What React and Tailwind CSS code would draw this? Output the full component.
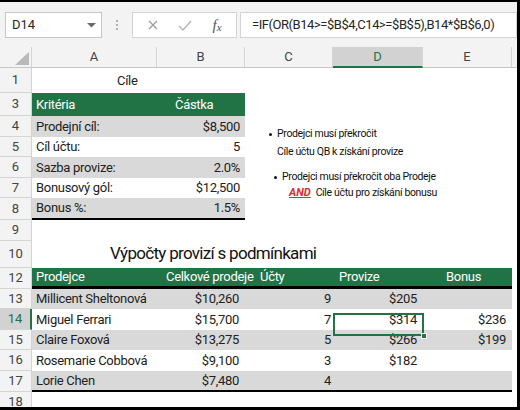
import React from "react";

function RH({ n, sel }) {
  return (
    <div
      className={
        sel
          ? "w-[32px] shrink-0 flex items-center justify-center border-b border-[#d4d4d4] border-r-2 border-r-[#217346] bg-[#d2d2d2] text-[13px] text-[#217346]"
          : "w-[32px] shrink-0 flex items-center justify-center border-b border-r border-[#d4d4d4] bg-[#f3f3f3] text-[13px] text-[#444]"
      }
    >
      {n}
    </div>
  );
}

function Cell({ w, className = "", children }) {
  return (
    <div className={`${w} shrink-0 flex items-center whitespace-nowrap ${className}`}>
      {children}
    </div>
  );
}

const WA = "w-[125px]";
const WB = "w-[88px]";
const WC = "w-[88px]";
const WD = "w-[90px]";
const WE = "w-[89px]";

function DataRow({ n, h, fill, last, sel, name, b, c, d, e }) {
  const wrap =
    "flex w-[480px] text-[13px] tracking-[-0.3px] text-[#222] " +
    (fill ? "bg-[#d9d9d9] " : "") +
    (last ? "border-b-2 border-black" : "");
  return (
    <div className={`flex ${h}`}>
      <RH n={n} sel={sel} />
      <div className={wrap}>
        <Cell w={WA} className="pl-[4px]">{name}</Cell>
        <Cell w={WB} className="justify-end pr-[6px]">{b}</Cell>
        <Cell w={WC} className="justify-end pr-[2px]">{c}</Cell>
        <Cell w={WD} className="justify-end pr-[6px]">{d}</Cell>
        <Cell w={WE} className="justify-end pr-[6px]">{e}</Cell>
      </div>
    </div>
  );
}

function GoalRow({ n, h, fill, last, label, value }) {
  const wrap =
    "flex w-[213px] text-[13px] tracking-[-0.3px] text-[#222] " +
    (fill ? "bg-[#d9d9d9] " : "") +
    (last ? "border-b-2 border-black" : "");
  return (
    <div className={`flex ${h}`}>
      <RH n={n} />
      <div className={wrap}>
        <Cell w={WA} className="pl-[4px]">{label}</Cell>
        <Cell w={WB} className="justify-end pr-[5px]">{value}</Cell>
      </div>
    </div>
  );
}

function ColHead({ w, label, sel }) {
  return (
    <div
      className={
        sel
          ? `${w} shrink-0 flex items-center justify-center bg-[#d2d2d2] border-b-2 border-b-[#217346] border-r border-r-[#d4d4d4] text-[#217346]`
          : `${w} shrink-0 flex items-center justify-center border-b border-b-[#c6c6c6] border-r border-r-[#d4d4d4] text-[#444]`
      }
    >
      {label}
    </div>
  );
}

function Bullet() {
  return <div className="w-[3px] h-[3px] rounded-full bg-[#111] shrink-0" />;
}

export default function App() {
  return (
    <div className="relative w-[520px] h-[410px] overflow-hidden bg-white border-t-2 border-r-[3px] border-b-[3px] border-black flex flex-col font-['Roboto',sans-serif]">
      {/* formula bar */}
      <div className="h-[45px] shrink-0 bg-[#f3f3f3] flex items-start pt-[10px] pl-[5px]">
        <div className="w-[97px] h-[26px] bg-white border border-[#c6c6c6] flex items-center justify-between pl-[6px] pr-[5px] text-[13px] text-[#262626]">
          <span>D14</span>
          <svg width="9" height="5" viewBox="0 0 9 5">
            <polygon points="0,0 9,0 4.5,4.5" fill="#6a6a6a" />
          </svg>
        </div>
        <div className="w-[30px] h-[26px] flex flex-col items-center justify-center gap-[2px]">
          <div className="w-[2px] h-[2px] bg-[#b0b0b0]" />
          <div className="w-[2px] h-[2px] bg-[#b0b0b0]" />
          <div className="w-[2px] h-[2px] bg-[#b0b0b0]" />
        </div>
        <div className="w-[105px] h-[26px] bg-white border border-[#d4d4d4] flex items-center">
          <div className="w-[37px] flex justify-center pl-[2px]">
            <svg width="10" height="10" viewBox="0 0 10 10">
              <path d="M1 1 L9 9 M9 1 L1 9" stroke="#9a9a9a" strokeWidth="1.2" fill="none" />
            </svg>
          </div>
          <div className="w-[30px] flex justify-center">
            <svg width="14" height="11" viewBox="0 0 14 11">
              <path d="M1 6 L5 10 L13 1" stroke="#b5b5b5" strokeWidth="1.4" fill="none" />
            </svg>
          </div>
          <div className="flex-1 flex justify-center pr-[2px] font-['Liberation_Serif',serif] italic text-[15px] text-[#555] leading-none">
            <span>f</span>
            <span className="text-[11px] self-end">x</span>
          </div>
        </div>
        <div className="ml-[3px] flex-1 h-[26px] bg-white border border-[#d4d4d4] flex items-center pl-[11px] text-[13px] tracking-[-0.45px] text-[#262626] whitespace-nowrap overflow-hidden">
          =IF(OR(B14&gt;=$B$4,C14&gt;=$B$5),B14*$B$6,0)
        </div>
      </div>

      {/* column headers */}
      <div className="h-[21px] shrink-0 flex bg-[#f3f3f3] text-[13px]">
        <div className="w-[32px] shrink-0 border-b border-b-[#c6c6c6] border-r border-r-[#d4d4d4] relative">
          <svg className="absolute left-[15px] top-[5px]" width="14" height="13" viewBox="0 0 14 13">
            <polygon points="14,0 14,13 0,13" fill="#b9b9b9" />
          </svg>
        </div>
        <ColHead w={WA} label="A" />
        <ColHead w={WB} label="B" />
        <ColHead w={WC} label="C" />
        <ColHead w={WD} label="D" sel />
        <ColHead w={WE} label="E" />
        <div className="flex-1 border-b border-b-[#c6c6c6]" />
      </div>

      {/* row 1 */}
      <div className="flex h-[25px] shrink-0">
        <RH n="1" />
        <div className="pl-[85px] flex items-center text-[13px] tracking-[-0.3px] text-[#222]">Cíle</div>
      </div>
      {/* row 3 */}
      <div className="flex h-[23px] shrink-0">
        <RH n="3" />
        <div className="flex w-[213px] bg-[#217346] text-white text-[13px] tracking-[-0.3px]">
          <Cell w={WA} className="pl-[4px]">Kritéria</Cell>
          <Cell w={WB} className="pl-[18px]">Částka</Cell>
        </div>
      </div>
      <GoalRow n="4" h="h-[21px]" fill label="Prodejní cíl:" value="$8,500" />
      <GoalRow n="5" h="h-[22px]" label="Cíl účtu:" value="5" />
      <GoalRow n="6" h="h-[21px]" fill label="Sazba provize:" value="2.0%" />
      <GoalRow n="7" h="h-[22px]" label="Bonusový gól:" value="$12,500" />
      <GoalRow n="8" h="h-[22px]" fill last label="Bonus %:" value="1.5%" />
      {/* row 9 */}
      <div className="flex h-[21px] shrink-0">
        <RH n="9" />
      </div>
      {/* row 10 */}
      <div className="flex h-[27px] shrink-0">
        <RH n="10" />
        <div className="pl-[78px] flex items-end pb-[1px] text-[17px] tracking-[-0.7px] text-[#111] whitespace-nowrap">
          Výpočty provizí s podmínkami
        </div>
      </div>
      {/* row 12 */}
      <div className="flex h-[21px] shrink-0">
        <RH n="12" />
        <div className="flex w-[480px] bg-[#217346] border-b-[3px] border-black text-white text-[13px] tracking-[-0.3px]">
          <Cell w={WA} className="pl-[4px]">Prodejce</Cell>
          <Cell w={WB} className="pl-[9px]">Celkové prodeje</Cell>
          <Cell w={WC} className="pl-[15px]">Účty</Cell>
          <Cell w={WD} className="pl-[6px]">Provize</Cell>
          <Cell w={WE} className="pl-[23px]">Bonus</Cell>
        </div>
      </div>
      <DataRow n="13" h="h-[22px]" fill name="Millicent Sheltonová" b="$10,260" c="9" d="$205" e="" />
      <DataRow n="14" h="h-[21px]" sel name="Miguel Ferrari" b="$15,700" c="7" d="$314" e="$236" />
      <DataRow n="15" h="h-[21px]" fill name="Claire Foxová" b="$13,275" c="5" d="$266" e="$199" />
      <DataRow n="16" h="h-[21px]" name="Rosemarie Cobbová" b="$9,100" c="3" d="$182" e="" />
      <DataRow n="17" h="h-[22px]" fill last name="Lorie Chen" b="$7,480" c="4" d="" e="" />
      <div className="flex h-[21px] shrink-0">
        <RH n="18" />
      </div>

      {/* text box notes */}
      <div className="absolute left-[269px] top-[125px] flex items-center gap-[5px] text-[10.5px] leading-[14px] tracking-[-0.35px] text-[#111] whitespace-nowrap">
        <Bullet />
        <span>Prodejci musí překročit</span>
      </div>
      <div className="absolute left-[277px] top-[143px] text-[10.5px] leading-[14px] tracking-[-0.35px] text-[#111] whitespace-nowrap">
        Cíle účtu QB k získání provize
      </div>
      <div className="absolute left-[274px] top-[168px] flex items-center gap-[5px] text-[10.5px] leading-[14px] tracking-[-0.35px] text-[#111] whitespace-nowrap">
        <Bullet />
        <span>Prodejci musí překročit oba Prodeje</span>
      </div>
      <div className="absolute left-[289px] top-[184px] flex items-center text-[10.5px] leading-[14px] tracking-[-0.35px] text-[#111] whitespace-nowrap">
        <span className="font-bold italic underline text-[#e8262a] text-[11px] tracking-normal">AND</span>
        <span className="ml-[5px]">Cíle účtu pro získání bonusu</span>
      </div>

      {/* selection D14 */}
      <div className="absolute left-[333px] top-[311px] w-[91px] h-[23px] border-2 border-[#217346]" />
      <div className="absolute left-[421px] top-[331px] w-[6px] h-[6px] bg-[#217346] border border-white" />
    </div>
  );
}
